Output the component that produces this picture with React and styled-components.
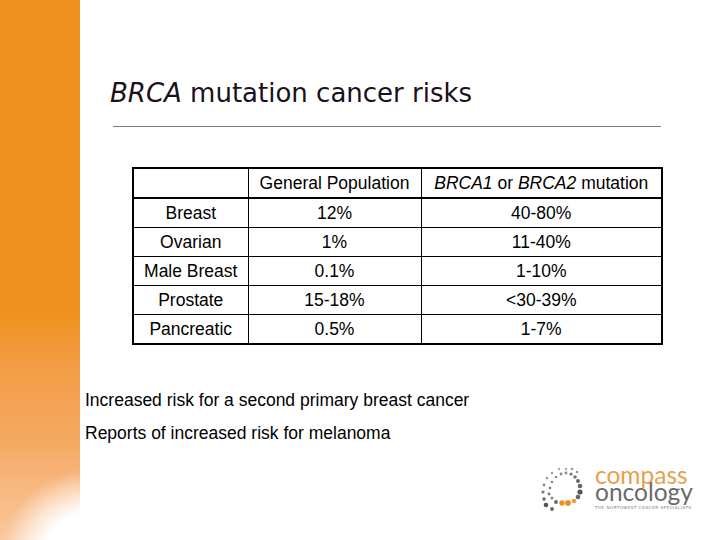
import React from 'react';
import styled, { createGlobalStyle } from 'styled-components';

const GlobalStyle = createGlobalStyle`
	html, body {
		margin: 0;
		padding: 0;
		background: #ffffff;
	}
`;

const Slide = styled.div`
	width: 720px;
	height: 540px;
	display: flex;
	background: #ffffff;
	overflow: hidden;
`;

const Sidebar = styled.div`
	width: 80px;
	flex-shrink: 0;
	background:
		radial-gradient(circle 90px at 90px 560px, #ffffff 0%, #ffffff 52%, rgba(255, 255, 255, 0.6) 72%, rgba(255, 255, 255, 0) 100%),
		linear-gradient(to bottom, #f0901f 0%, #f0901f 58%, #f39d45 68%, #f5a860 81%, #f9c8a0 100%);
`;

const Main = styled.div`
	flex: 1;
	display: flex;
	flex-direction: column;
	align-items: flex-start;
	position: relative;
`;

const Title = styled.h1`
	margin: 77px 0 0 30px;
	font-family: 'DejaVu Sans', Verdana, sans-serif;
	font-weight: normal;
	font-size: 26px;
	line-height: 32px;
	color: #1a1020;
`;

const Rule = styled.hr`
	align-self: stretch;
	margin: 17px 59px 0 33px;
	border: none;
	border-top: 1px solid #7a7a6e;
	height: 0;
`;

const Table = styled.table`
	margin: 40px 0 0 52px;
	border-collapse: collapse;
	table-layout: fixed;
	border: 2px solid #000;
	font-family: 'Liberation Sans', Arial, sans-serif;
	font-size: 17.5px;
	color: #000;
`;

const Cell = styled.td`
	border: 1px solid #000;
	border-bottom-width: ${(p) => (p.$head ? '2px' : '1px')};
	height: 28px;
	padding: 0;
	text-align: center;
	vertical-align: middle;
	line-height: 20px;
	white-space: nowrap;
`;

const Col = styled.col`
	width: ${(p) => p.$w}px;
`;

const Notes = styled.div`
	margin: 45px 0 0 5px;
	display: flex;
	flex-direction: column;
	gap: 13px;
	font-family: 'Liberation Sans', Arial, sans-serif;
	font-size: 17.5px;
	line-height: 20px;
	color: #000;
`;

const Logo = styled.div`
	position: absolute;
	left: 458px;
	top: 464px;
	display: flex;
	align-items: flex-start;
	gap: 7px;
`;

const LogoText = styled.div`
	display: flex;
	flex-direction: column;
	margin-top: 2px;
	font-family: Lato, 'DejaVu Sans', sans-serif;
	font-weight: 400;
`;

const Word = styled.span`
	font-size: 24.5px;
	line-height: 17px;
	height: 17px;
	color: ${(p) => p.$color};
`;

const Tag = styled.span`
	margin-top: 5px;
	font-family: 'DejaVu Sans', sans-serif;
	font-size: 4px;
	line-height: 5px;
	letter-spacing: 0.55px;
	color: #777;
	white-space: nowrap;
`;

const dots = [
	[-14, 5, 1.4, '#777'],
	[-13, -1, 1.3, '#777'],
	[-11, -7, 1.3, '#888'],
	[-7, -12, 1.3, '#888'],
	[-2, -15, 1.4, '#888'],
	[3, -16, 1.4, '#888'],
	[8, -15, 1.6, '#777'],
	[12, -12, 1.8, '#777'],
	[15, -8, 2.0, '#666'],
	[17, -3, 2.3, '#666'],
	[17, 3, 2.6, '#555'],
	[-19, 10, 1.7, '#666'],
	[-20, 3, 1.6, '#777'],
	[-19, -4, 1.4, '#888'],
	[-16, -11, 1.3, '#999'],
	[-11, -16, 1.2, '#999'],
	[-4, -20, 1.2, '#aaa'],
	[3, -20, 1.2, '#aaa'],
	[9, -20, 1.3, '#999'],
	[14, -17, 1.3, '#999'],
	[-17, 16, 2.3, '#555'],
	[-11, 20, 1.9, '#666'],
	[-7, 13, 1.9, '#666'],
	[-1, 14, 2.7, '#f0901f'],
	[5, 14, 2.9, '#f0901f'],
	[11, 12, 2.3, '#f0a040'],
	[15, 8, 2.3, '#666'],
	[-11, 9, 1.5, '#888'],
];

const CompassMark = () => (
	<svg width="50" height="52" viewBox="-25 -25 50 52">
		{dots.map(([x, y, r, c], i) => (
			<circle key={i} cx={x} cy={y} r={r} fill={c} />
		))}
	</svg>
);

const rows = [
	['Breast', '12%', '40-80%'],
	['Ovarian', '1%', '11-40%'],
	['Male Breast', '0.1%', '1-10%'],
	['Prostate', '15-18%', '<30-39%'],
	['Pancreatic', '0.5%', '1-7%'],
];

const App = () => {
	return (
		<Slide>
			<GlobalStyle />
			<Sidebar />
			<Main>
				<Title>
					<i>BRCA</i> mutation cancer risks
				</Title>
				<Rule />
				<Table>
					<colgroup>
						<Col $w={115} />
						<Col $w={173} />
						<Col $w={241} />
					</colgroup>
					<tbody>
						<tr>
							<Cell $head></Cell>
							<Cell $head>General Population</Cell>
							<Cell $head>
								<i>BRCA1</i> or <i>BRCA2</i> mutation
							</Cell>
						</tr>
						{rows.map((r) => (
							<tr key={r[0]}>
								{r.map((v, i) => (
									<Cell key={i}>{v}</Cell>
								))}
							</tr>
						))}
					</tbody>
				</Table>
				<Notes>
					<span>Increased risk for a second primary breast cancer</span>
					<span>Reports of increased risk for melanoma</span>
				</Notes>
				<Logo>
					<CompassMark />
					<LogoText>
						<Word $color="#e8a050">compass</Word>
						<Word $color="#6a6a6a">oncology</Word>
						<Tag>THE NORTHWEST CANCER SPECIALISTS</Tag>
					</LogoText>
				</Logo>
			</Main>
		</Slide>
	);
};

export default App;
